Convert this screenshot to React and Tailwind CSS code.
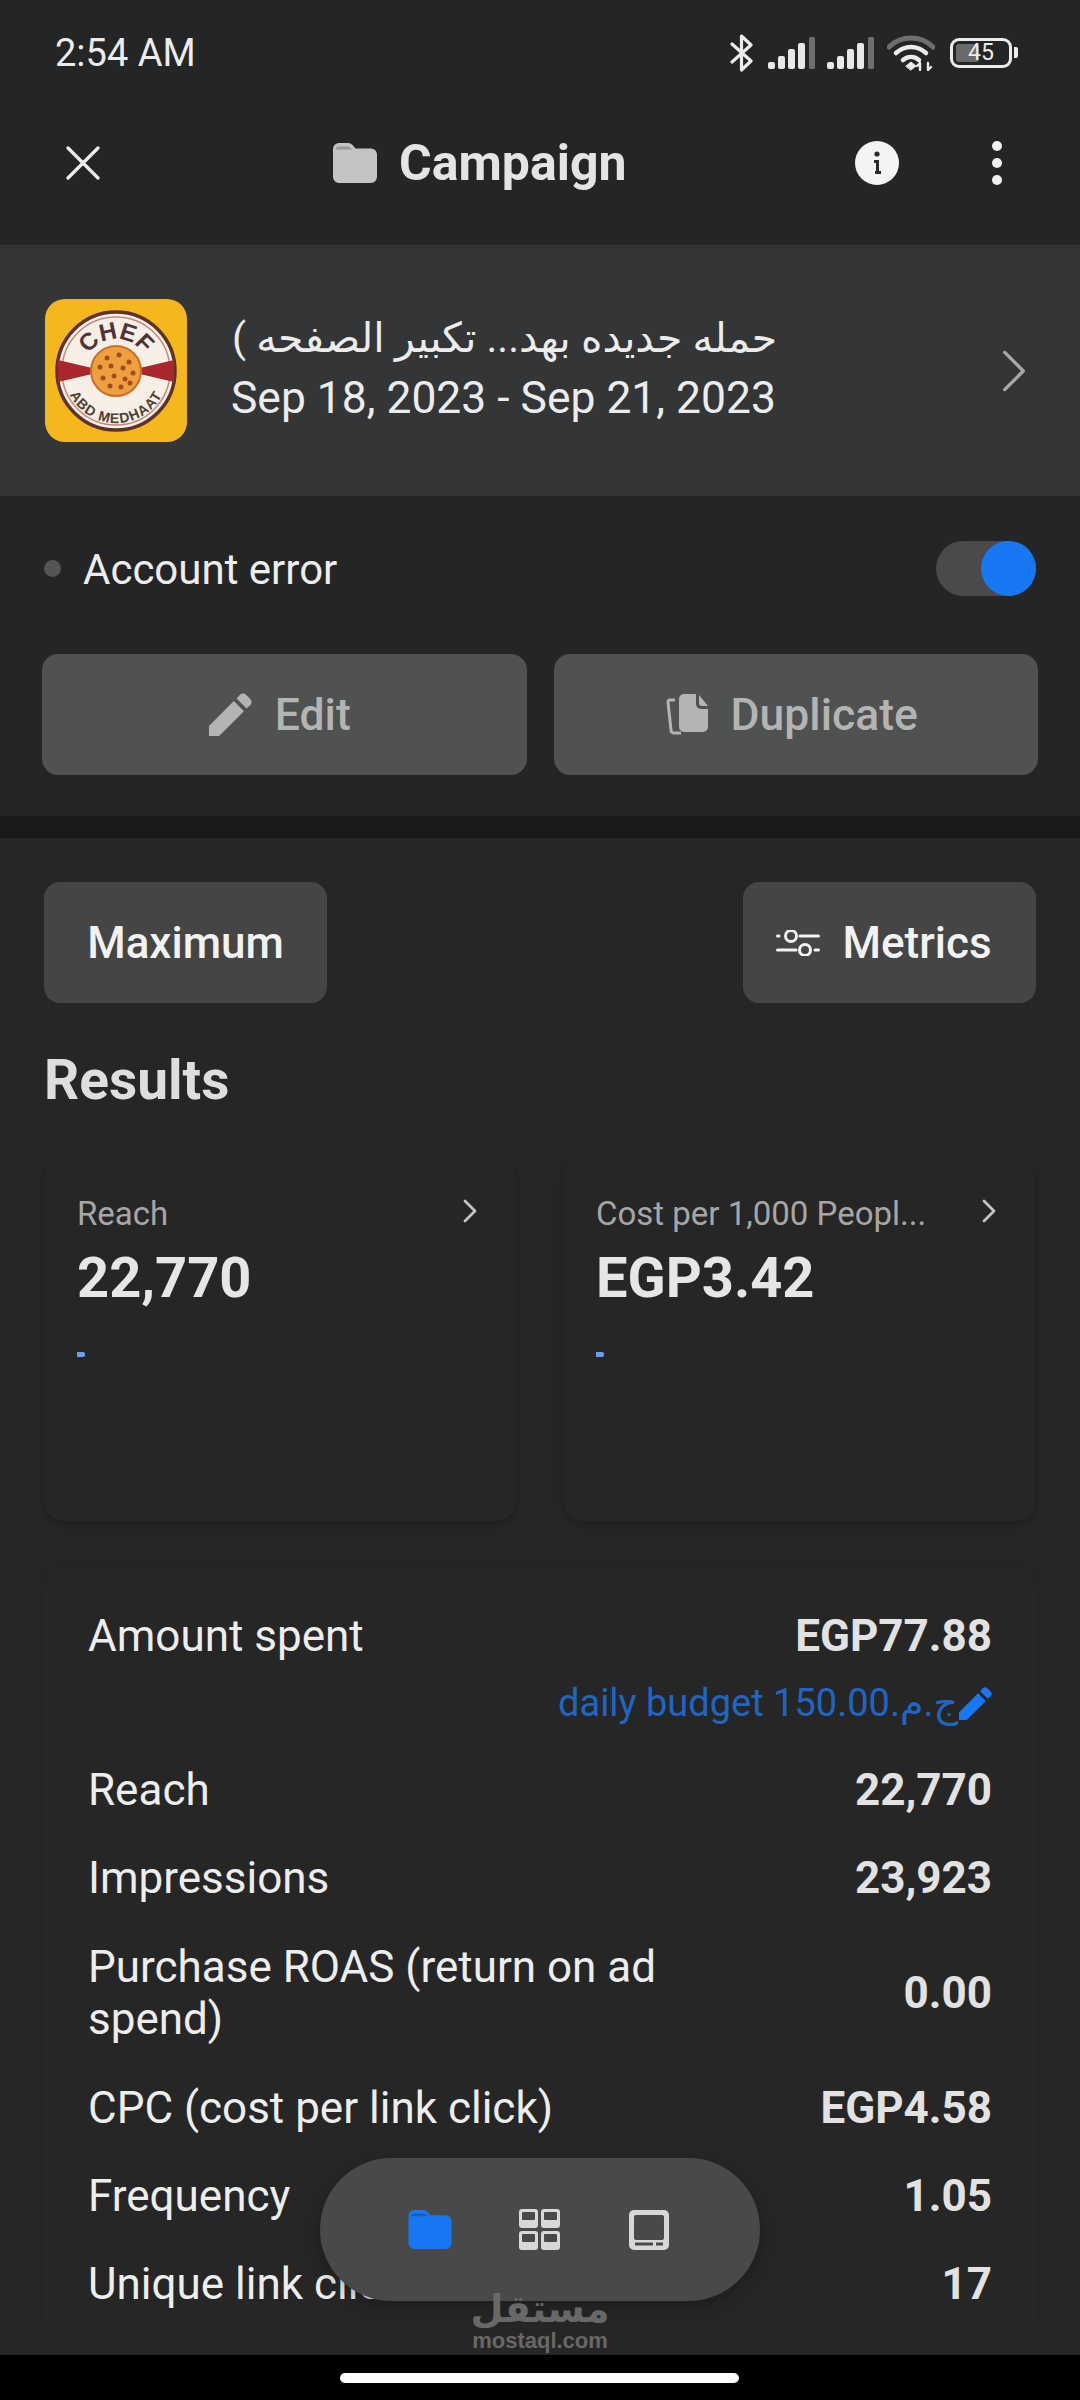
import React from 'react';

const Folder = ({ className }) => (
  <svg viewBox="0 0 44 40" className={className} fill="currentColor">
    <path d="M0 6a6 6 0 0 1 6-6h9a6 6 0 0 1 4.500 2l3 3.500H38a6 6 0 0 1 6 6V34a6 6 0 0 1-6 6H6a6 6 0 0 1-6-6z" />
    <path d="M2.500 6.500a3.500 3.500 0 0 1 3.500-3h9a4 4 0 0 1 3 1.500l1.500 1.500z" fill="#000" opacity="0.22" />
  </svg>
);

const Chevron = ({ className, width = 2.4 }) => (
  <svg viewBox="0 0 14 24" className={className} fill="none" stroke="currentColor" strokeWidth={width} strokeLinecap="round" strokeLinejoin="round">
    <path d="M2 2l10 10L2 22" />
  </svg>
);

const Pencil = ({ className }) => (
  <svg viewBox="0 0 32 32" className={className} fill="currentColor">
    <path d="M0 32v-7.500L18.500 6l7.500 7.500L7.500 32z" />
    <path d="M20.500 4l2.400-2.600a3.400 3.400 0 0 1 4.800 0l2.900 2.900a3.400 3.400 0 0 1 0 4.800L28 11.500z" />
  </svg>
);

const Bars = () => (
  <svg viewBox="0 0 48 32" className="w-[48px] h-[32px]">
    <rect x="0" y="25" width="7" height="7" rx="2" fill="#e8e8e8" />
    <rect x="10" y="19" width="7" height="13" rx="2" fill="#e8e8e8" />
    <rect x="20" y="12" width="7" height="20" rx="2" fill="#e8e8e8" />
    <rect x="30" y="6" width="7" height="26" rx="2" fill="#e8e8e8" />
    <rect x="41" y="0" width="6" height="32" rx="1.500" fill="#6e6e6e" />
  </svg>
);

const Tile = ({ x, y }) => (
  <path
    d="M3 0h13a3 3 0 0 1 3 3v13a3 3 0 0 1-3 3H3a3 3 0 0 1-3-3V3a3 3 0 0 1 3-3zM4 3a1 1 0 0 0-1 1v6a1 1 0 0 0 1 1h11a1 1 0 0 0 1-1V4a1 1 0 0 0-1-1z"
    transform={`translate(${x} ${y})`}
  />
);

function StatusBar() {
  return (
    <div className="h-[105px] pl-[55px] pr-[62px] flex items-center justify-between">
      <span className="text-[38px] leading-none text-[#ececec]">2:54 AM</span>
      <div className="flex items-center">
        <svg viewBox="0 0 24 38" className="w-[24px] h-[38px]" fill="none" stroke="#ececec" strokeWidth="3.200" strokeLinejoin="round" strokeLinecap="round">
          <path d="M2 10l19 17-9.500 9V2l9.500 9L2 28" />
        </svg>
        <div className="ml-[14px]"><Bars /></div>
        <div className="ml-[11px]"><Bars /></div>
        <svg viewBox="0 0 48 36" className="ml-[12px] w-[48px] h-[36px]" fill="none" strokeLinecap="round">
          <path d="M2 12C14 0 34 0 46 12" stroke="#6e6e6e" strokeWidth="5" />
          <path d="M9 18c9-8 21-8 30 0" stroke="#ececec" strokeWidth="4.500" />
          <path d="M16 25c5-4 11-4 16 0" stroke="#ececec" strokeWidth="4.500" />
          <path d="M19 31l5-4 5 4-5 4z" fill="#ececec" stroke="#ececec" strokeWidth="1" />
          <path d="M33 35v-7m-3 3l3-3M41 28v7m3-3l-3 3" stroke="#ececec" strokeWidth="2.400" />
        </svg>
        <div className="ml-[15px] relative w-[62px] h-[30px] rounded-[9px] border-[3px] border-[#ececec] p-[3px]">
          <div className="h-full w-[45%] rounded-[3px] bg-[#6a6a6a]" />
          <span className="absolute inset-0 flex items-center justify-center text-[23px] leading-none text-[#ececec]">45</span>
        </div>
        <div className="ml-[2px] w-[4px] h-[11px] rounded-r-[2px] bg-[#ececec]" />
      </div>
    </div>
  );
}

function TopBar() {
  return (
    <div className="h-[140px] pb-[24px] pl-[66px] pr-[78px] flex items-center">
      <svg viewBox="0 0 34 34" className="w-[34px] h-[34px]" fill="none" stroke="#f0f0f0" strokeWidth="3.200" strokeLinecap="round">
        <path d="M2 2l30 30M32 2L2 32" />
      </svg>
      <div className="ml-[233px] flex items-center">
        <Folder className="w-[44px] h-[40px] text-[#c4c4c4]" />
        <span className="ml-[22px] text-[50px] leading-none font-bold text-[#e4e4e4]">Campaign</span>
      </div>
      <div className="ml-auto w-[44px] h-[44px] rounded-full bg-[#f4f4f4] flex items-center justify-center">
        <svg viewBox="0 0 8 24" className="w-[8px] h-[24px]" fill="#2a2a2a">
          <circle cx="4" cy="3" r="2.600" />
          <path d="M1 9h5v11h2v3H2v-3h1v-8H1z" />
        </svg>
      </div>
      <div className="ml-[93px] flex flex-col gap-[7px]">
        <div className="w-[10px] h-[10px] rounded-full bg-[#f0f0f0]" />
        <div className="w-[10px] h-[10px] rounded-full bg-[#f0f0f0]" />
        <div className="w-[10px] h-[10px] rounded-full bg-[#f0f0f0]" />
      </div>
    </div>
  );
}

function PizzaLogo() {
  const toppings = [[-9, -13], [3, -16], [13, -9], [-16, -4], [-5, -5], [7, -3], [17, 2], [-13, 7], [-2, 5], [9, 8], [-6, 15], [5, 16], [14, 12]];
  return (
    <div className="w-[142px] h-[143px] rounded-[20px] bg-[#f4b81c] flex items-center justify-center overflow-hidden shrink-0">
      <svg viewBox="0 0 142 142" className="w-[142px] h-[142px]">
        <defs>
          <path id="arcTop" d="M39 71a32 32 0 0 1 64 0" />
          <path id="arcBottom" d="M19 71a52 52 0 0 0 104 0" />
        </defs>
        <circle cx="71" cy="71" r="59" fill="#f7efe6" stroke="#5e3226" strokeWidth="3.500" />
        <circle cx="71" cy="71" r="54" fill="none" stroke="#c08a80" strokeWidth="1.500" />
        <path d="M13 60l34 8v6l-34 8zM129 60l-34 8v6l34 8z" fill="#a8262c" />
        <circle cx="71" cy="71" r="25" fill="#ee9f3e" stroke="#c8702a" strokeWidth="2" />
        {toppings.map(([x, y], i) => (
          <circle key={i} cx={71 + x} cy={71 + y} r="2.500" fill="#a84a20" />
        ))}
        <text fontFamily="Liberation Sans, sans-serif" fontWeight="700" fontSize="24" fill="#4c3438" textAnchor="middle">
          <textPath href="#arcTop" startOffset="50%">CHEF</textPath>
        </text>
        <text fontFamily="Liberation Sans, sans-serif" fontWeight="700" fontSize="14" fill="#4c4034" textAnchor="middle" letterSpacing="1">
          <textPath href="#arcBottom" startOffset="50%">ABD MEDHAAT</textPath>
        </text>
      </svg>
    </div>
  );
}

function CampaignRow() {
  return (
    <div className="h-[251px] bg-[#343537] pl-[45px] pr-[53px] flex items-center">
      <PizzaLogo />
      <div className="ml-[44px] w-[546px]">
        <div dir="rtl" className="-mt-[12px] mb-[4px] text-[41px] leading-[62px] text-[#ececec]">حمله جديده بهد... تكبير الصفحه )</div>
        <div className="text-[44.400px] leading-[50px] text-[#ececec]">Sep 18, 2023 - Sep 21, 2023</div>
      </div>
      <Chevron width={1.800} className="ml-auto w-[26px] h-[46px] text-[#a8a8a8]" />
    </div>
  );
}

function AccountSection() {
  return (
    <div className="h-[320px] bg-[#242526] px-[42px] pt-[45px]">
      <div className="h-[55px] flex items-center">
        <div className="ml-[2px] w-[17px] h-[17px] rounded-full bg-[#555555]" />
        <span className="ml-[22px] mt-[3px] text-[42px] leading-none text-[#ededed]">Account error</span>
        <div className="ml-auto mr-[2px] w-[100px] h-[55px] rounded-full bg-[#4a4a4a] flex justify-end">
          <div className="w-[55px] h-[55px] rounded-full bg-[#1877f2]" />
        </div>
      </div>
      <div className="mt-[58px] grid grid-cols-2 gap-[27px]">
        <div className="h-[121px] pr-[9px] rounded-[16px] bg-[#505151] flex items-center justify-center text-[#b4b4b4]">
          <Pencil className="w-[43px] h-[43px]" />
          <span className="ml-[23px] mt-[2px] text-[44.500px] leading-none font-medium">Edit</span>
        </div>
        <div className="h-[121px] pr-[9px] rounded-[16px] bg-[#505151] flex items-center justify-center text-[#b4b4b4]">
          <svg viewBox="0 0 44 42" className="w-[44px] h-[42px]" fill="currentColor">
            <path d="M19 0h12v10a5 5 0 0 0 5 5h7v18a5 5 0 0 1-5 5H19a5 5 0 0 1-5-5V5a5 5 0 0 1 5-5z" />
            <path d="M34 1l9 11h-6a3 3 0 0 1-3-3z" />
            <path d="M10 6H5a2 2 0 0 0-2 2l3 28a3 3 0 0 0 3 3h7" fill="none" stroke="currentColor" strokeWidth="3" />
          </svg>
          <span className="ml-[22px] mt-[2px] text-[44.500px] leading-none font-medium">Duplicate</span>
        </div>
      </div>
    </div>
  );
}

function ResultCard({ label, value }) {
  return (
    <div className="h-[363px] rounded-[20px] bg-[#262626] shadow-[0_4px_10px_rgba(0,0,0,0.2)] pl-[33px] pr-[39px] pt-[36px]">
      <div className="h-[40px] flex items-start justify-between">
        <span className="text-[33px] leading-[40px] text-[#a6a6a6]">{label}</span>
        <Chevron width={2.800} className="mt-[5px] w-[14px] h-[24px] text-[#c4c4c4]" />
      </div>
      <div className="mt-[12px] text-[56px] leading-[64px] font-bold text-[#e6e6e6]">{value}</div>
      <div className="mt-[42px] w-[8px] h-[5px] rounded-r-[2px] bg-[#6f9cf0]" />
    </div>
  );
}

function MetricRow({ label, value, className = 'h-[88px]' }) {
  return (
    <div className={`flex items-center justify-between ${className}`}>
      <span className="w-[640px] text-[44px] leading-[52px] text-[#ededed]">{label}</span>
      <span className="text-[44px] leading-none font-bold text-[#e2e2e2]">{value}</span>
    </div>
  );
}

function ResultsSection() {
  return (
    <div className="flex-1 bg-[#262626] px-[44px] pt-[44px] overflow-hidden">
      <div className="flex justify-between">
        <div className="w-[283px] h-[121px] rounded-[16px] bg-[#454545] flex items-center justify-center text-[44px] font-medium text-[#f2f2f2]">Maximum</div>
        <div className="w-[293px] h-[121px] pr-[11px] rounded-[16px] bg-[#454545] flex items-center justify-center text-[#f2f2f2]">
          <svg viewBox="0 0 44 26" className="w-[44px] h-[26px]" fill="none" stroke="currentColor" strokeWidth="3" strokeLinecap="round">
            <path d="M1.500 6H3M24 6h18.500M1.500 20H20M39 20h3.500" />
            <circle cx="15" cy="6" r="5.500" />
            <circle cx="29" cy="20" r="5.500" />
          </svg>
          <span className="ml-[22px] text-[44px] leading-none font-medium">Metrics</span>
        </div>
      </div>
      <h1 className="mt-[47px] text-[55px] leading-[60px] font-bold text-[#dedede]">Results</h1>
      <div className="mt-[48px] grid grid-cols-2 gap-[47px] pr-[1px]">
        <ResultCard label="Reach" value="22,770" />
        <ResultCard label="Cost per 1,000 Peopl..." value="EGP3.42" />
      </div>
      <div className="mt-[45px] rounded-t-[20px] shadow-[0_-1px_6px_rgba(0,0,0,0.12)] px-[44px] pt-[26px]">
        <MetricRow label="Amount spent" value="EGP77.88" />
        <div className="h-[48px] -mt-[1px] mb-[19px] flex items-center justify-end text-[#1f66c4]">
          <span className="text-[38px] leading-none">{'daily budget 150.00ج.م.\u200F'}</span>
          <Pencil className="ml-[1px] w-[33px] h-[33px] text-[#1877f2]" />
        </div>
        <MetricRow label="Reach" value="22,770" />
        <MetricRow label="Impressions" value="23,923" />
        <MetricRow label="Purchase ROAS (return on ad spend)" value="0.00" className="h-[142px]" />
        <MetricRow label="CPC (cost per link click)" value="EGP4.58" />
        <MetricRow label="Frequency" value="1.05" />
        <MetricRow label="Unique link clicks" value="17" />
      </div>
    </div>
  );
}

function FloatingNav() {
  return (
    <div className="absolute left-[320px] top-[2158px] w-[440px] h-[143px] rounded-full bg-[#494949] shadow-[0_6px_18px_rgba(0,0,0,0.25)] flex items-center pl-[88px]">
      <Folder className="w-[44px] h-[39px] text-[#1877f2]" />
      <svg viewBox="0 0 41 41" className="ml-[67px] w-[41px] h-[41px]" fill="#d8d8d8" fillRule="evenodd">
        <Tile x={0} y={0} />
        <Tile x={22} y={0} />
        <Tile x={0} y={22} />
        <Tile x={22} y={22} />
      </svg>
      <svg viewBox="0 0 40 40" className="ml-[69px] w-[40px] h-[40px]" fill="#d8d8d8" fillRule="evenodd">
        <path d="M5 0h30a5 5 0 0 1 5 5v30a5 5 0 0 1-5 5H5a5 5 0 0 1-5-5V5a5 5 0 0 1 5-5zM7 5a2 2 0 0 0-2 2v21a2 2 0 0 0 2 2h26a2 2 0 0 0 2-2V7a2 2 0 0 0-2-2zM6 32.500v3h18v-3zM27 32.500v3h7v-3z" />
      </svg>
    </div>
  );
}

export default function App() {
  return (
    <div className="relative w-[1080px] h-[2400px] overflow-hidden bg-black font-[family-name:Roboto,'DejaVu_Sans',sans-serif]">
      <div className="h-[2355px] flex flex-col">
        <div className="bg-[#242526]">
          <StatusBar />
          <TopBar />
        </div>
        <CampaignRow />
        <AccountSection />
        <div className="h-[22px] bg-[#1a1a1a]" />
        <ResultsSection />
      </div>

      <FloatingNav />

      {/* mostaql watermark */}
      <div className="absolute left-[465px] top-[2288px] w-[150px] flex flex-col items-center text-[#686868] font-bold">
        <span className="text-[38px] leading-[42px]">مستقل</span>
        <span className="text-[22px] leading-[22px] font-['Liberation_Sans',sans-serif]">mostaql.com</span>
      </div>

      <div className="absolute left-[340px] top-[2373px] w-[399px] h-[10px] rounded-full bg-white" />
    </div>
  );
}
